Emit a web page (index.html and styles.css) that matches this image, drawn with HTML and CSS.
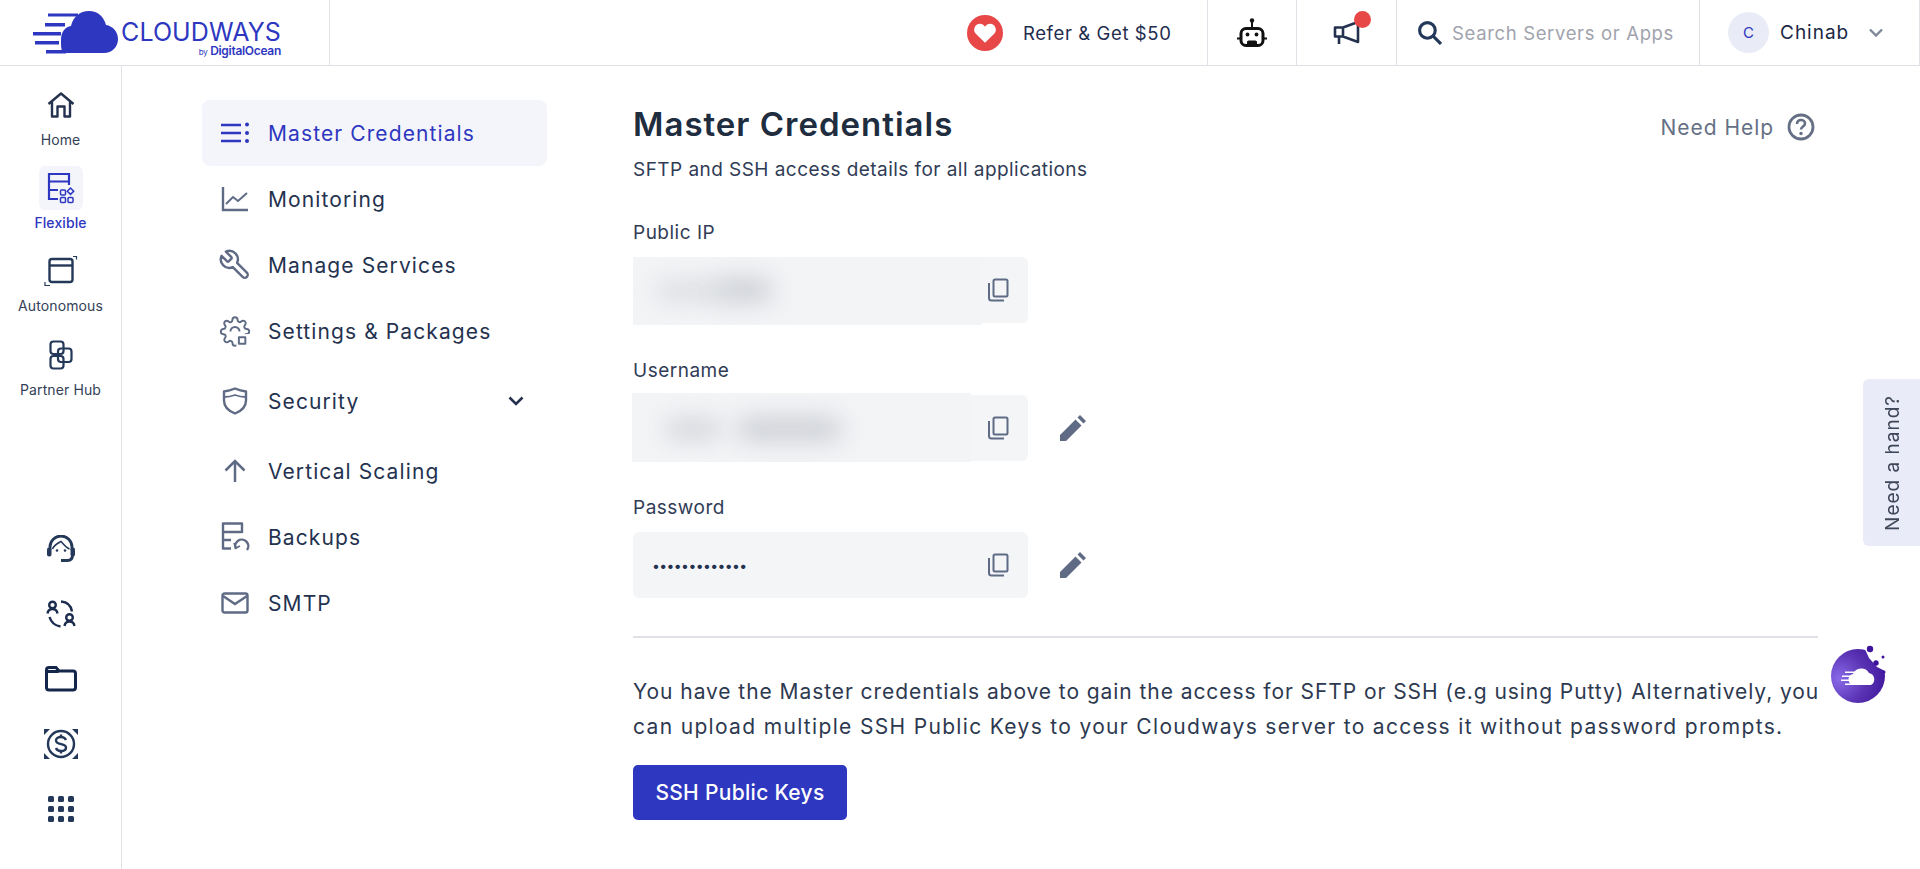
FILE: index.html
```html
<!DOCTYPE html>
<html lang="en">

<head>
    <meta charset="UTF-8">
    <title>Master Credentials</title>
    <link rel="stylesheet" href="styles.css">
</head>

<body>

    <!-- top bar -->
    <header class="topbar">
        <div class="logo">
            <svg class="logo-cloud" viewBox="0 0 86 44" width="86" height="44">
                <path fill="#2e37bf" d="M33 43C28 43 28 38 28 30 28 22 32 17 38 16 40 7 47 1 56 1 65 1 71 7 73 15 80 16 85 22 85 29 85 37 79 43 71 43z" />
                <path fill="#2e37bf" d="M15 3.500h30v3H15zM12 13h20v3.500H12zM0 22h28v3.500H0zM2 31h24v3.500H2zM13 40h20v3.500H13z" />
            </svg>
            <div class="logo-text">
                <span class="logo-name">CLOUDWAYS</span>
                <span class="logo-by"><small>by</small> DigitalOcean</span>
            </div>
        </div>
        <div class="top-spacer"></div>
        <div class="top-cell refer">
            <span class="heart">
                <svg viewBox="0 0 24 24" width="26" height="26"><path fill="#fff" d="M12 21 3.500 12.600A5.400 5.400 0 0 1 7.300 3.500c2 0 3.600 1 4.700 2.700 1.100-1.700 2.700-2.700 4.700-2.700a5.400 5.400 0 0 1 3.800 9.100z" /></svg>
            </span>
            <span>Refer &amp; Get $50</span>
        </div>
        <div class="top-cell bot">
            <svg viewBox="0 0 30 30" width="30" height="30" fill="none" stroke="#111" stroke-width="3">
                <circle cx="15" cy="2.500" r="2.200" fill="#111" stroke="none" />
                <path d="M15 3v7" stroke-width="2" />
                <rect x="4" y="10.500" width="22" height="17" rx="5" />
                <path d="M0 20.500h4M26 20.500h4" stroke-width="2" />
                <circle cx="10.500" cy="16.500" r="1.900" fill="#111" stroke="none" />
                <circle cx="19.500" cy="16.500" r="1.900" fill="#111" stroke="none" />
                <path d="M10 26v-2.500l1.500-1h7l1.500 1V26z" fill="#111" stroke="none" />
            </svg>
        </div>
        <div class="top-cell megaphone">
            <svg viewBox="0 0 30 26" width="30" height="26" fill="none" stroke="#24324f" stroke-width="2.600" stroke-linejoin="round">
                <path d="M2 7.500h8v9H2zM10 7.500 25 2v20l-15-5.500zM6 17v7M25 3v19" />
            </svg>
            <span class="dot-red"></span>
        </div>
        <div class="top-cell search">
            <svg viewBox="0 0 24 24" width="25" height="25" fill="none" stroke="#24395a" stroke-width="3">
                <circle cx="10" cy="10" r="7.500" />
                <path d="m15.500 15.500 7.500 7.500" />
            </svg>
            <span class="search-text">Search Servers or Apps</span>
        </div>
        <div class="top-cell user">
            <span class="avatar">C</span>
            <span class="user-name">Chinab</span>
            <svg class="user-arrow" viewBox="0 0 14 9" width="14" height="9" fill="none" stroke="#7f8798" stroke-width="2.400"><path d="m1 1.500 6 6 6-6" /></svg>
        </div>
    </header>

    <div class="page">

        <!-- left rail -->
        <nav class="rail">
            <div class="rail-top">
                <a class="rail-item">
                    <span class="rail-icon">
                        <svg viewBox="0 0 28 26" width="28" height="26" fill="none" stroke="#24324f" stroke-width="2.400" stroke-linejoin="round"><path d="M1.500 12 14 1.500 26.500 12M5 9.500V24.500h5.500V14.500h7V24.500H23V9.500" /></svg>
                    </span>
                    <span class="rail-label">Home</span>
                </a>
                <a class="rail-item active">
                    <span class="rail-icon">
                        <svg viewBox="0 0 28 32" width="28" height="32" fill="none" stroke="#2e37bf" stroke-width="2.200"><path d="M22 13V2H2v25h9M2 9.500h20M2 18h9" /><g stroke-width="1.500"><rect x="13.500" y="18" width="5" height="5" rx="1" /><rect x="13.500" y="25.500" width="5" height="5" rx="1" /><rect x="21" y="25.500" width="5" height="5" rx="1" /><path d="m23.500 16 3.200 3.200-3.200 3.200-3.200-3.200z" /></g></svg>
                    </span>
                    <span class="rail-label">Flexible</span>
                </a>
                <a class="rail-item">
                    <span class="rail-icon">
                        <svg viewBox="0 0 34 32" width="34" height="32" fill="none" stroke="#24395a" stroke-width="2.400"><rect x="5.500" y="4" width="23" height="23" rx="2.500" /><path d="M5.500 10.500h23" /><path d="M29 1.500h3.500v3M1 27v3.500h5" stroke-width="1.200" /></svg>
                    </span>
                    <span class="rail-label">Autonomous</span>
                </a>
                <a class="rail-item">
                    <span class="rail-icon">
                        <svg viewBox="0 0 24 30" width="24" height="30" fill="none" stroke="#24395a" stroke-width="2.200"><rect x="1.500" y="1.500" width="13" height="12.500" rx="3" /><rect x="9" y="8.500" width="13.500" height="13.500" rx="3" /><rect x="1.500" y="16" width="13" height="12.500" rx="3" /></svg>
                    </span>
                    <span class="rail-label">Partner Hub</span>
                </a>
            </div>
            <div class="rail-bottom">
                <a class="rail-tool">
                    <svg viewBox="0 0 30 28" width="30" height="28" fill="none" stroke="#24395a" stroke-width="2.800"><path d="M4 15v-3a11 11 0 0 1 22 0v3" /><path d="M6.500 14C8 10 11 8.500 15 6.500c2.500 2.500 5 6 8.500 7.500" stroke-width="1.600" /><rect x="1" y="12.500" width="4.500" height="9" rx="2" fill="#24395a" stroke="none" /><rect x="24.500" y="12.500" width="4.500" height="9" rx="2" fill="#24395a" stroke="none" /><path d="M26.500 20c0 3.500-1.500 5.500-5 5.500H15" stroke-width="3" /><circle cx="11" cy="15.500" r="1.300" fill="#24395a" stroke="none" /><circle cx="19" cy="15.500" r="1.300" fill="#24395a" stroke="none" /></svg>
                </a>
                <a class="rail-tool">
                    <svg viewBox="0 0 30 28" width="30" height="28" fill="none" stroke="#1c2c4e" stroke-width="2.400"><circle cx="6.500" cy="5" r="3.300" /><path d="M1.500 13.500c.5-3 2.500-4.500 5-4.500s4.500 1.500 5 4.500" /><circle cx="23.500" cy="17.500" r="3.300" /><path d="M18.500 26c.5-3 2.500-4.500 5-4.500s4.500 1.500 5 4.500" /><path d="M15 1.500c6 .5 10 4 11 10M3.500 17c1.500 5 5 8.500 11 9.500" /></svg>
                </a>
                <a class="rail-tool">
                    <svg viewBox="0 0 32 26" width="32" height="26" fill="none" stroke="#14264a" stroke-width="3"><path d="M1.500 4c0-1.500 1-2.500 2.500-2.500h7L14 5h14c1.500 0 2.500 1 2.500 2.500v14c0 1.500-1 2.500-2.500 2.500H4c-1.500 0-2.500-1-2.500-2.500z" /><path d="M2 4h10l2 3H2z" fill="#14264a" stroke="none" /></svg>
                </a>
                <a class="rail-tool">
                    <svg viewBox="0 0 34 30" width="34" height="30" fill="none" stroke="#24395a" stroke-width="2.400"><circle cx="17" cy="15" r="13" /><path d="M22 11c-1-2-3-3-5-3-3 0-5 1.500-5 3.500 0 5 10 2.300 10 7 0 2.200-2.200 3.500-5 3.500-2.300 0-4.300-1-5-3" /><path d="M17 5.500V8M17 22v2.500" /><path d="M0 0h6L0 6zM34 0h-6l6 6zM0 30h6L0 24zM34 30h-6l6-6z" fill="#24395a" stroke="none" /></svg>
                </a>
                <a class="rail-tool">
                    <span class="apps-grid">
                        <i></i><i></i><i></i><i></i><i></i><i></i><i></i><i></i><i></i>
                    </span>
                </a>
            </div>
        </nav>

        <!-- server sub menu -->
        <aside class="subnav">
            <a class="subnav-item active">
                <svg viewBox="0 0 30 22" width="30" height="22" fill="none" stroke="#2e37bf" stroke-width="2.400"><path d="M1 3h20M1 11h20M1 19h20" /><g fill="#2e37bf" stroke="none"><circle cx="27" cy="2.500" r="2" /><circle cx="27" cy="11" r="2" /><circle cx="27" cy="19" r="2" /></g></svg>
                <span>Master Credentials</span>
            </a>
            <a class="subnav-item">
                <svg viewBox="0 0 28 26" width="28" height="26" fill="none" stroke="#5f6b85" stroke-width="2.400"><path d="M2 1v23h25" /><path d="m5 18 7-7 5 4 9-8" stroke-width="2" /></svg>
                <span>Monitoring</span>
            </a>
            <a class="subnav-item">
                <svg viewBox="0 0 24 24" width="34" height="34" fill="none" stroke="#5f6b85" stroke-width="1.700" stroke-linejoin="round"><path transform="matrix(-1 0 0 1 24 0)" d="M14.700 6.300a1 1 0 0 0 0 1.400l1.600 1.600a1 1 0 0 0 1.400 0l3.770-3.770a6 6 0 0 1-7.940 7.940l-6.910 6.910a2.120 2.120 0 0 1-3-3l6.910-6.910a6 6 0 0 1 7.940-7.940l-3.760 3.760z" /></svg>
                <span>Manage Services</span>
            </a>
            <a class="subnav-item">
                <svg viewBox="0 0 24 24" width="31" height="31" fill="none" stroke="#5f6b85" stroke-width="1.500" stroke-linejoin="round"><path d="M19.400 15a1.650 1.650 0 0 0 .33 1.820l.06.06a2 2 0 0 1 0 2.830 2 2 0 0 1-2.830 0l-.06-.06a1.650 1.650 0 0 0-1.820-.33 1.650 1.650 0 0 0-1 1.510V21a2 2 0 0 1-2 2 2 2 0 0 1-2-2v-.09A1.650 1.650 0 0 0 9 19.400a1.650 1.650 0 0 0-1.820.33l-.06.06a2 2 0 0 1-2.830 0 2 2 0 0 1 0-2.830l.06-.06a1.650 1.650 0 0 0 .33-1.820 1.650 1.650 0 0 0-1.510-1H3a2 2 0 0 1-2-2 2 2 0 0 1 2-2h.09A1.650 1.650 0 0 0 4.600 9a1.650 1.650 0 0 0-.33-1.820l-.06-.06a2 2 0 0 1 0-2.830 2 2 0 0 1 2.830 0l.06.06a1.650 1.650 0 0 0 1.820.33H9a1.650 1.650 0 0 0 1-1.510V3a2 2 0 0 1 2-2 2 2 0 0 1 2 2v.09a1.650 1.650 0 0 0 1 1.510 1.650 1.650 0 0 0 1.820-.33l.06-.06a2 2 0 0 1 2.830 0 2 2 0 0 1 0 2.830l-.06.06a1.650 1.650 0 0 0-.33 1.820V9a1.650 1.650 0 0 0 1.510 1H21a2 2 0 0 1 2 2 2 2 0 0 1-2 2h-.09a1.650 1.650 0 0 0-1.510 1z" /><path d="M8.500 12a3.500 3.500 0 0 1 7 0" /><rect x="13" y="14" width="11" height="10" fill="#fff" stroke="none" /><rect x="15" y="16.500" width="5" height="5" /></svg>
                <span>Settings &amp; Packages</span>
            </a>
            <a class="subnav-item tall">
                <svg viewBox="0 0 26 28" width="26" height="28" fill="none" stroke="#5f6b85" stroke-width="2.400" stroke-linejoin="round"><path d="M2 4.500C6 4 9.500 3 13 1.500 16.500 3 20 4 24 4.500v9c0 6.500-4.500 10.500-11 13-6.500-2.500-11-6.500-11-13z" /><path d="M2 10c4 0 8-.8 11-2 3 1.200 7 2 11 2" stroke-width="1.800" /></svg>
                <span>Security</span>
                <svg class="subnav-arrow" viewBox="0 0 16 10" width="16" height="10" fill="none" stroke="#24324f" stroke-width="2.600"><path d="m1.500 1.500 6.500 6.500 6.500-6.500" /></svg>
            </a>
            <a class="subnav-item">
                <svg viewBox="0 0 24 24" width="24" height="24" fill="none" stroke="#5f6b85" stroke-width="2.500"><path d="M12 23V2M2.500 11.500 12 2l9.500 9.500" /></svg>
                <span>Vertical Scaling</span>
            </a>
            <a class="subnav-item">
                <svg viewBox="0 0 28 30" width="28" height="30" fill="none" stroke="#5f6b85" stroke-width="2.400" stroke-linejoin="round"><path d="M21 11V1.500H2v25h8M2 10h19M2 18h8" /><path d="M15 27a6.500 6.500 0 1 1 11 1" /><path d="M13 21l2 5 4-2" stroke-width="1.800" /></svg>
                <span>Backups</span>
            </a>
            <a class="subnav-item">
                <svg viewBox="0 0 28 22" width="28" height="22" fill="none" stroke="#5f6b85" stroke-width="2.400"><rect x="1.500" y="1.500" width="25" height="19" rx="2" /><path d="m2 4 12 8 12-8" /></svg>
                <span>SMTP</span>
            </a>
        </aside>

        <!-- credentials -->
        <main class="content">
            <div class="content-head">
                <h1>Master Credentials</h1>
                <div class="need-help">
                    <span>Need Help</span>
                    <svg viewBox="0 0 28 28" width="28" height="28" fill="none" stroke="#667085" stroke-width="2.800"><circle cx="14" cy="14" r="12" /><path d="M10 11c0-2.500 1.800-4 4-4s4 1.500 4 3.500c0 3-4 3-4 6" stroke-width="2.600" /><circle cx="14" cy="20.500" r="1.700" fill="#667085" stroke="none" /></svg>
                </div>
            </div>
            <p class="sub">SFTP and SSH access details for all applications</p>

            <div class="cred">
                <label>Public IP</label>
                <div class="cred-row">
                    <div class="field">
                        <span class="redact ip"><i class="smear s1"></i><i class="smear s1b"></i></span>
                        <svg class="copy" viewBox="0 0 22 24" width="22" height="24" fill="none" stroke="#5f6b85" stroke-width="2"><rect x="6.500" y="1.500" width="14" height="17" rx="1.500" /><path d="M2 5v15c0 1.500 1 2.500 2.500 2.500H17" /></svg>
                    </div>
                </div>
            </div>

            <div class="cred">
                <label>Username</label>
                <div class="cred-row">
                    <div class="field">
                        <span class="redact uname"><i class="smear s2"></i><i class="smear s3"></i></span>
                        <svg class="copy" viewBox="0 0 22 24" width="22" height="24" fill="none" stroke="#5f6b85" stroke-width="2"><rect x="6.500" y="1.500" width="14" height="17" rx="1.500" /><path d="M2 5v15c0 1.500 1 2.500 2.500 2.500H17" /></svg>
                    </div>
                    <svg class="pencil" viewBox="0 0 26 26" width="26" height="26"><path fill="#5f6b85" d="M0 26v-6L15.500 4.500l6 6L6 26zM17.500 2.500 20 0l6 6-2.500 2.500z" /></svg>
                </div>
            </div>

            <div class="cred">
                <label>Password</label>
                <div class="cred-row">
                    <div class="field">
                        <span class="pass">•••••••••••••</span>
                        <svg class="copy" viewBox="0 0 22 24" width="22" height="24" fill="none" stroke="#5f6b85" stroke-width="2"><rect x="6.500" y="1.500" width="14" height="17" rx="1.500" /><path d="M2 5v15c0 1.500 1 2.500 2.500 2.500H17" /></svg>
                    </div>
                    <svg class="pencil" viewBox="0 0 26 26" width="26" height="26"><path fill="#5f6b85" d="M0 26v-6L15.500 4.500l6 6L6 26zM17.500 2.500 20 0l6 6-2.500 2.500z" /></svg>
                </div>
            </div>

            <hr class="divider">

            <p class="note">
                <span class="note-line">You have the Master credentials above to gain the access for SFTP or SSH (e.g using Putty) Alternatively, you</span>
                <span class="note-line wide">can upload multiple SSH Public Keys to your Cloudways server to access it without password prompts.</span>
            </p>

            <button class="primary">SSH Public Keys</button>
        </main>
    </div>

    <div class="hand"><span>Need a hand?</span></div>

    <svg class="bubble" viewBox="0 0 58 58" width="58" height="58">
        <defs>
            <radialGradient id="bubbleFill" cx="0.150" cy="0.550" r="0.950">
                <stop offset="0" stop-color="#8a6ae8" />
                <stop offset="0.500" stop-color="#5b35b5" />
                <stop offset="1" stop-color="#3c139a" />
            </radialGradient>
        </defs>
        <circle cx="27" cy="31" r="27" fill="url(#bubbleFill)" />
        <path fill="#fff" d="M33 2 38 13 46 22 56 27 58 0z" />
        <circle cx="39" cy="4" r="3.200" fill="#3c139a" />
        <circle cx="45" cy="18" r="2.700" fill="#3c139a" />
        <circle cx="52" cy="12" r="1.500" fill="#3c139a" />
        <circle cx="53" cy="27" r="1.500" fill="#3c139a" />
        <path fill="#fff" d="M24 40a5.500 5.500 0 0 1-2-11 9 9 0 0 1 16-1 6.500 6.500 0 0 1 2 12z" />
        <path fill="#fff" d="M14 26.500h12V28H14zM11 30.500h11v1.500H11zM10 34.500h11V36H10zM14 38.500h11V40H14z" />
    </svg>

</body>

</html>
```

FILE: styles.css
```css
* {
    box-sizing: border-box;
}

body {
    margin: 0;
    height: 869px;
    overflow: hidden;
    font-family: Inter, "Liberation Sans", sans-serif;
    color: #24324f;
    background: #fff;
    position: relative;
}

svg {
    display: block;
    flex-shrink: 0;
}

/* top bar */
.topbar {
    display: flex;
    height: 66px;
    border-bottom: 1px solid #dfe1e6;
}

.logo {
    width: 330px;
    padding-left: 33px;
    display: flex;
    align-items: center;
    gap: 3px;
    border-right: 1px solid #dfe1e6;
}

.logo-cloud {
    margin-top: -2px;
}

.logo-text {
    width: 159px;
    display: flex;
    flex-direction: column;
    align-items: flex-end;
    margin-top: 14px;
}

.logo-name {
    font-size: 25px;
    line-height: 24px;
    letter-spacing: 0.100px;
    color: #2e37bf;
}

.logo-by {
    font-size: 12px;
    line-height: 13px;
    font-weight: 600;
    letter-spacing: -0.300px;
    color: #2e37bf;
}

.logo-by small {
    font-size: 8px;
    font-weight: 400;
}

.top-spacer {
    flex: 1;
}

.top-cell {
    display: flex;
    align-items: center;
    border-right: 1px solid #dfe1e6;
    position: relative;
}

.refer {
    width: 241px;
    gap: 20px;
    font-size: 18.500px;
    letter-spacing: 0.600px;
    color: #1f2d4f;
}

.heart {
    width: 36px;
    height: 36px;
    border-radius: 50%;
    background: #e74747;
    display: flex;
    align-items: center;
    justify-content: center;
}

.bot {
    width: 89px;
    justify-content: center;
}

.megaphone {
    width: 100px;
    justify-content: center;
    padding-left: 2px;
}

.dot-red {
    position: absolute;
    left: 57px;
    top: 11px;
    width: 17px;
    height: 17px;
    border-radius: 50%;
    background: #e74747;
}

.search {
    width: 303px;
    padding-left: 20px;
    gap: 10px;
}

.search-text {
    font-size: 18.500px;
    color: #a0a3ad;
    letter-spacing: 0.650px;
}

.user {
    width: 220px;
    padding-left: 28px;
}

.avatar {
    width: 41px;
    height: 41px;
    border-radius: 50%;
    background: #e9ebf7;
    color: #2e37bf;
    font-size: 15px;
    display: flex;
    align-items: center;
    justify-content: center;
}

.user-name {
    margin-left: 11px;
    font-size: 19px;
    letter-spacing: 1px;
    color: #1b2743;
}

.user-arrow {
    margin-left: 20px;
}

/* left rail + content */
.page {
    display: flex;
    height: 803px;
}

.rail {
    width: 122px;
    flex-shrink: 0;
    border-right: 1px solid #dfe1e6;
    display: flex;
    flex-direction: column;
    justify-content: space-between;
    padding: 17px 0 28px;
}

.rail-top {
    display: flex;
    flex-direction: column;
    gap: 16.200px;
}

.rail-item {
    display: flex;
    flex-direction: column;
    align-items: center;
    gap: 3px;
}

.rail-icon {
    width: 44px;
    height: 44px;
    border-radius: 6px;
    display: flex;
    align-items: center;
    justify-content: center;
}

.rail-item.active .rail-icon {
    background: #f4f5fb;
}

.rail-label {
    font-size: 14px;
    line-height: 20px;
    letter-spacing: 0.100px;
    color: #343f58;
}

.rail-item.active .rail-label {
    color: #2e37bf;
    font-weight: 500;
}

.rail-tool {
    height: 65px;
    display: flex;
    align-items: center;
    justify-content: center;
}

.apps-grid {
    display: grid;
    grid-template-columns: repeat(3, 6px);
    gap: 4px;
}

.apps-grid i {
    width: 6px;
    height: 6px;
    border-radius: 1.500px;
    background: #24395a;
}

/* sub menu */
.subnav {
    width: 345px;
    margin: 34px 0 0 80px;
    flex-shrink: 0;
}

.subnav-item {
    height: 66px;
    padding-left: 16px;
    display: flex;
    align-items: center;
    font-size: 21px;
    letter-spacing: 1.100px;
    color: #24324f;
    border-radius: 8px;
}

.subnav-item.tall {
    height: 74px;
}

.subnav-item > svg:first-child {
    width: 34px;
    margin-right: 16px;
}

.subnav-item.active {
    background: #f4f5fb;
    color: #2e37bf;
}

.subnav-arrow {
    margin-left: auto;
    margin-right: 23px;
}

/* main */
.content {
    width: 1185px;
    margin-left: 86px;
    padding-top: 35px;
}

.content-head {
    display: flex;
    justify-content: space-between;
    align-items: flex-start;
}

h1 {
    margin: -1px 0 1px;
    font-size: 33px;
    line-height: 48px;
    font-weight: 600;
    letter-spacing: 1px;
    color: #202d3f;
}

.need-help {
    display: flex;
    align-items: center;
    gap: 13px;
    margin: 12px 3px 0 0;
    font-size: 21px;
    letter-spacing: 0.950px;
    color: #667085;
}

.sub {
    margin: 9px 0 0;
    font-size: 19px;
    line-height: 24px;
    letter-spacing: 0.450px;
    color: #303c56;
}

.cred {
    margin-top: 39px;
}

.cred + .cred {
    margin-top: 35.500px;
}

.cred label {
    display: block;
    font-size: 19px;
    line-height: 24px;
    letter-spacing: 0.500px;
    color: #303c56;
}

.cred-row {
    margin-top: 12px;
    display: flex;
    align-items: center;
    gap: 32px;
}

.field {
    width: 395px;
    height: 66px;
    padding: 0 19px;
    background: #f3f5f7;
    border-radius: 6px;
    display: flex;
    align-items: center;
    justify-content: flex-end;
    position: relative;
}

.pass {
    margin-right: auto;
    font-size: 14px;
    letter-spacing: -0.600px;
    color: #24324f;
}

/* blurred values lie over the field */
.redact {
    position: absolute;
    left: 0;
    top: 0;
    background: #f3f4f6;
    overflow: hidden;
}

.redact.ip {
    width: 349px;
    height: 68px;
}

.redact.uname {
    left: -1px;
    top: -2px;
    width: 339px;
    height: 69px;
}

.smear {
    position: absolute;
    background: #c9ccd2;
    filter: blur(12px);
    border-radius: 12px;
}

.s1 {
    left: 22px;
    top: 24px;
    width: 75px;
    height: 20px;
    opacity: 0.600;
}

.s1b {
    left: 85px;
    top: 22px;
    width: 55px;
    height: 22px;
}

.s2 {
    left: 32px;
    top: 26px;
    width: 58px;
    height: 20px;
    opacity: 0.800;
}

.s3 {
    left: 105px;
    top: 25px;
    width: 105px;
    height: 22px;
}

.divider {
    margin: 38px 0 0;
    border: 0;
    border-top: 2px solid #dfe1e6;
}

.note {
    margin: 35.500px 0 0;
    font-size: 21px;
    line-height: 35px;
    letter-spacing: 0.930px;
    color: #2d3950;
}

.note-line {
    display: block;
    white-space: nowrap;
}

.note-line.wide {
    letter-spacing: 1.330px;
}

.primary {
    display: block;
    margin-top: 21.500px;
    width: 214px;
    height: 55px;
    border: 0;
    border-radius: 5px;
    background: #2e37bf;
    color: #fff;
    font-family: inherit;
    font-size: 21px;
    letter-spacing: 0.300px;
    font-weight: 500;
}

/* floating */
.hand {
    position: absolute;
    right: 0;
    top: 379px;
    width: 57px;
    height: 167px;
    padding-left: 2px;
    background: #e9ebf8;
    border-radius: 6px 0 0 6px;
    display: flex;
    align-items: center;
    justify-content: center;
}

.hand span {
    writing-mode: vertical-rl;
    transform: rotate(180deg);
    font-size: 19px;
    letter-spacing: 1px;
    color: #3e4759;
}

.bubble {
    position: absolute;
    left: 1831px;
    top: 645px;
}
```
